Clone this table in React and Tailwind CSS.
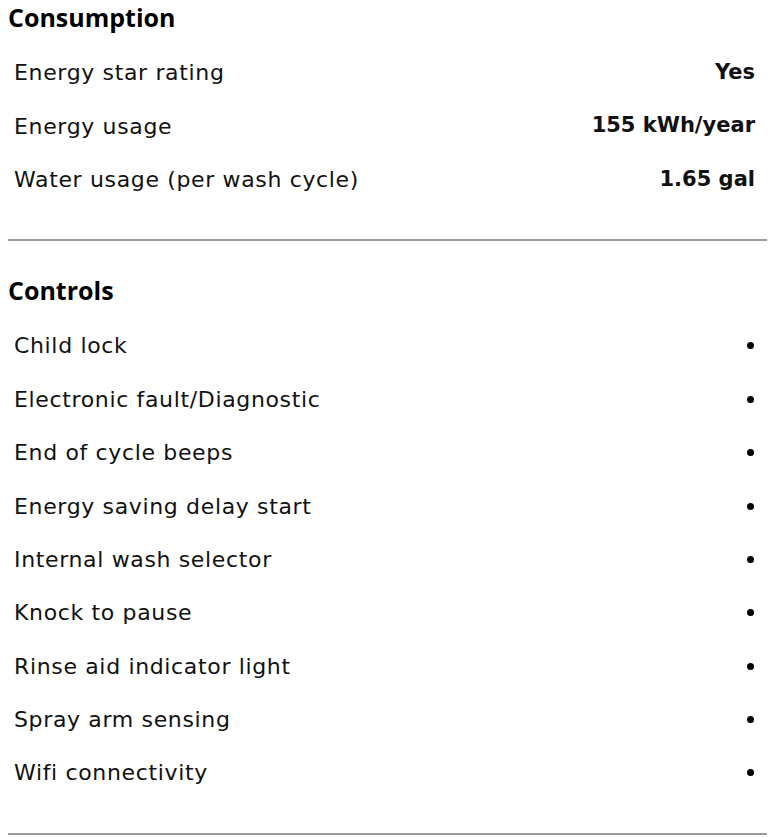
import React from 'react'

const consumption = [
  ['Energy star rating', 'Yes'],
  ['Energy usage', '155 kWh/year'],
  ['Water usage (per wash cycle)', '1.65 gal'],
]

const controls = [
  'Child lock',
  'Electronic fault/Diagnostic',
  'End of cycle beeps',
  'Energy saving delay start',
  'Internal wash selector',
  'Knock to pause',
  'Rinse aid indicator light',
  'Spray arm sensing',
  'Wifi connectivity',
]

function Row({ label, children }) {
  return (
    <div className="flex h-[53.4px] items-center justify-between pl-[6px] pr-[12px]">
      <span className="text-[22px] tracking-[0.65px] text-[#111] font-['DejaVu_Sans',sans-serif]">{label}</span>
      {children}
    </div>
  )
}

function Section({ title, children }) {
  return (
    <section className="pb-[33px] border-b-2 border-[#9a9a9a]">
      <h2 className="text-[25px] leading-[34px] font-bold text-black mb-[12px]">{title}</h2>
      {children}
    </section>
  )
}

export default function App() {
  return (
    <div className="bg-white min-h-screen px-[8px] pr-[2px] font-['Open_Sans',sans-serif]">
      <Section title="Consumption">
        {consumption.map(([label, value]) => (
          <Row key={label} label={label}>
            <span className="text-[21px] font-bold text-[#111] font-['DejaVu_Sans',sans-serif]">{value}</span>
          </Row>
        ))}
      </Section>
      <div className="pt-[32px]">
        <Section title="Controls">
          {controls.map((label) => (
            <Row key={label} label={label}>
              <span className="w-[7px] h-[7px] rounded-full bg-black mr-[1px]" />
            </Row>
          ))}
        </Section>
      </div>
    </div>
  )
}
